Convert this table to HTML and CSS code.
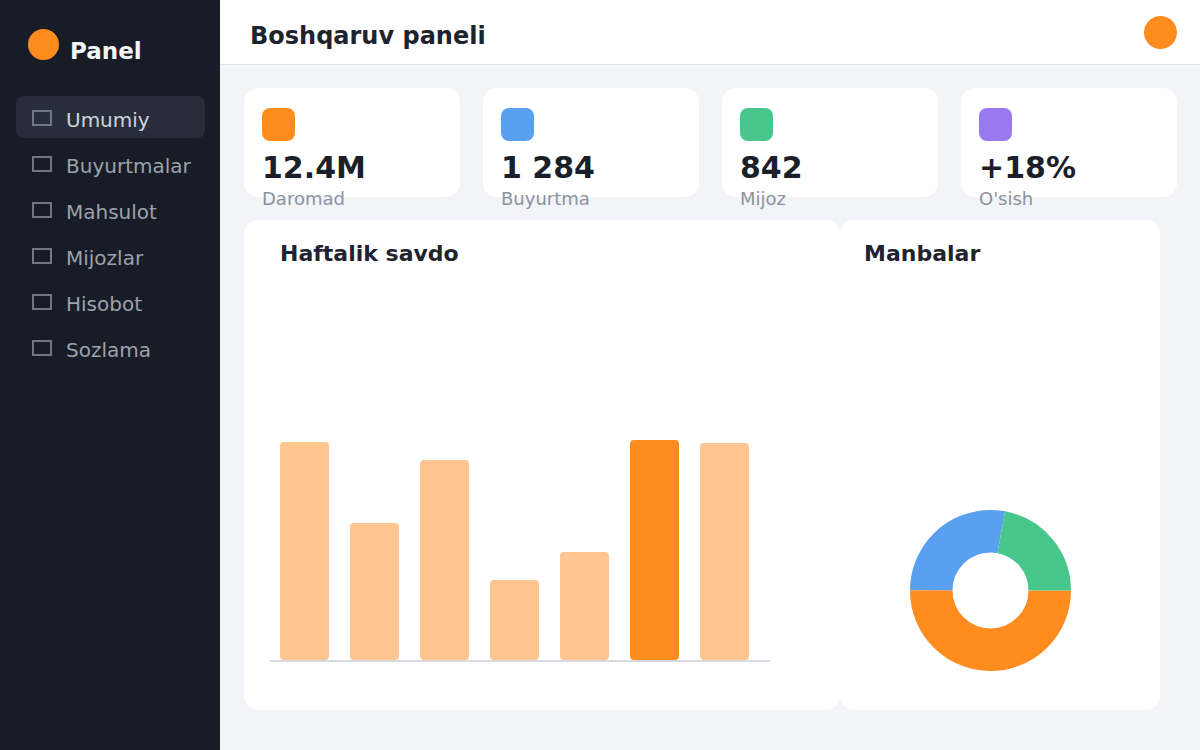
FILE: index.html
```html
<!DOCTYPE html>
<html lang="uz">
<head>
<meta charset="utf-8">
<title>Boshqaruv paneli</title>
<link rel="stylesheet" href="styles.css">
</head>
<body>
<aside class="sidebar">
  <div class="brand">
    <span class="brand-dot"></span>
    <span class="brand-name">Panel</span>
  </div>
  <nav class="nav">
    <a class="nav-item active"><span class="nav-icon"></span><span class="nav-text">Umumiy</span></a>
    <a class="nav-item"><span class="nav-icon"></span><span class="nav-text">Buyurtmalar</span></a>
    <a class="nav-item"><span class="nav-icon"></span><span class="nav-text">Mahsulot</span></a>
    <a class="nav-item"><span class="nav-icon"></span><span class="nav-text">Mijozlar</span></a>
    <a class="nav-item"><span class="nav-icon"></span><span class="nav-text">Hisobot</span></a>
    <a class="nav-item"><span class="nav-icon"></span><span class="nav-text">Sozlama</span></a>
  </nav>
</aside>
<main class="main">
  <header class="topbar">
    <h1 class="title">Boshqaruv paneli</h1>
    <span class="avatar"></span>
  </header>
  <section class="content">
    <div class="stats">
      <div class="stat"><span class="stat-icon orange"></span><div class="stat-value">12.4M</div><div class="stat-label">Daromad</div></div>
      <div class="stat"><span class="stat-icon blue"></span><div class="stat-value">1 284</div><div class="stat-label">Buyurtma</div></div>
      <div class="stat"><span class="stat-icon green"></span><div class="stat-value">842</div><div class="stat-label">Mijoz</div></div>
      <div class="stat"><span class="stat-icon purple"></span><div class="stat-value">+18%</div><div class="stat-label">O'sish</div></div>
    </div>
    <div class="charts">
      <div class="card sales">
        <h2 class="card-title">Haftalik savdo</h2>
        <div class="bars">
          <span class="bar" style="height:218px"></span>
          <span class="bar" style="height:137px"></span>
          <span class="bar" style="height:200px"></span>
          <span class="bar" style="height:80px"></span>
          <span class="bar" style="height:108px"></span>
          <span class="bar peak" style="height:220px"></span>
          <span class="bar" style="height:217px"></span>
        </div>
      </div>
      <div class="card sources">
        <h2 class="card-title">Manbalar</h2>
        <svg class="donut" width="161" height="161" viewBox="0 0 161 161">
          <circle cx="80.5" cy="80.5" r="59.25" fill="none" stroke="#ff8c1f" stroke-width="42.5" stroke-dasharray="186.14 400"/>
          <circle cx="80.5" cy="80.5" r="59.25" fill="none" stroke="#5aa0f0" stroke-width="42.5" stroke-dasharray="103.41 400" stroke-dashoffset="-186.14"/>
          <circle cx="80.5" cy="80.5" r="59.25" fill="none" stroke="#48c78c" stroke-width="42.5" stroke-dasharray="82.73 400" stroke-dashoffset="-289.55"/>
        </svg>
      </div>
    </div>
  </section>
</main>
</body>
</html>
```

FILE: styles.css
```css
* { box-sizing: border-box; }
html, body { margin: 0; padding: 0; }
body {
  display: flex;
  width: 1200px;
  height: 750px;
  overflow: hidden;
  font-family: "DejaVu Sans", "Liberation Sans", sans-serif;
  background: #f3f4f7;
}
.sidebar {
  width: 220px;
  flex: 0 0 220px;
  background: #181c27;
  padding: 29px 15px 0 16px;
}
.brand {
  display: flex;
  align-items: center;
  height: 31px;
  padding-left: 12px;
  gap: 11px;
}
.brand-dot {
  width: 31px;
  height: 31px;
  border-radius: 50%;
  background: #ff8c1f;
}
.brand-name {
  color: #f3f4f6;
  font-weight: bold;
  font-size: 23px;
  margin-top: 12px;
}
.nav {
  margin-top: 36px;
  display: flex;
  flex-direction: column;
  gap: 4px;
}
.nav-item {
  display: flex;
  align-items: center;
  height: 42px;
  padding-left: 16px;
  gap: 14px;
  border-radius: 8px;
  color: #9ca2ae;
  font-size: 20px;
}
.nav-item.active {
  background: #282d3b;
  color: #cfd3dc;
}
.nav-text {
  margin-top: 6px;
}
.nav-icon {
  width: 20px;
  height: 16px;
  border: 2px solid #6f7684;
  margin-top: 2px;
}
.main {
  flex: 1;
  display: flex;
  flex-direction: column;
}
.topbar {
  height: 65px;
  background: #fff;
  border-bottom: 1px solid #e3e6eb;
  display: flex;
  align-items: center;
  justify-content: space-between;
  padding: 0 23px 0 30px;
}
.title {
  margin: 0;
  font-size: 24px;
  font-weight: bold;
  color: #1f232e;
  margin-top: 8px;
}
.avatar {
  width: 33px;
  height: 33px;
  border-radius: 50%;
  background: #ff8c1f;
}
.content {
  padding: 23px 23px 0 24px;
}
.stats {
  display: grid;
  grid-template-columns: repeat(4, 1fr);
  gap: 23px;
}
.stat {
  height: 109px;
  background: #fff;
  border-radius: 14px;
  padding: 20px 18px 0;
}
.stat-icon {
  display: block;
  width: 33px;
  height: 33px;
  border-radius: 8px;
}
.orange { background: #ff8c1f; }
.blue { background: #5aa0f0; }
.green { background: #48c78c; }
.purple { background: #987aee; }
.stat-value {
  margin-top: 9px;
  font-size: 30px;
  font-weight: bold;
  color: #1b1f2a;
  line-height: 35px;
}
.stat-label {
  margin-top: 3px;
  font-size: 18px;
  line-height: 21px;
  color: #8b93a1;
}
.charts {
  display: flex;
  margin-top: 23px;
}
.card {
  background: #fff;
  border-radius: 14px;
  height: 490px;
  display: flex;
  flex-direction: column;
}
.card-title {
  margin: 0;
  font-size: 22px;
  font-weight: bold;
  color: #1f232e;
  line-height: 26px;
}
.sales {
  width: 596px;
  padding: 21px 0 48px 36px;
}
.bars {
  margin-top: auto;
  margin-left: -10px;
  width: 500px;
  height: 240px;
  display: flex;
  align-items: flex-end;
  gap: 21px;
  padding-left: 10px;
  border-bottom: 2px solid #d6dae2;
}
.bar {
  width: 49px;
  border-radius: 4px;
  background: #ffc590;
}
.bar.peak {
  background: #ff8c1f;
}
.sources {
  width: 320px;
  padding: 21px 24px 39px 24px;
}
.donut {
  display: block;
  margin-top: auto;
  margin-left: 46px;
}
```
